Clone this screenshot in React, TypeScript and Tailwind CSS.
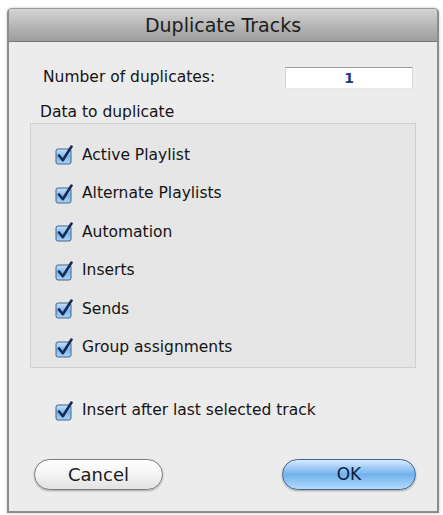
const font = { fontFamily: '"DejaVu Sans", "Liberation Sans", sans-serif' };

const Check = () => (
  <svg width="19" height="20" viewBox="0 0 19 20" className="shrink-0">
    <defs>
      <linearGradient id="cb" x1="0" y1="0" x2="0" y2="1">
        <stop offset="0" stopColor="#c9e3fb" />
        <stop offset="0.5" stopColor="#7fb6ea" />
        <stop offset="1" stopColor="#a9d2f6" />
      </linearGradient>
    </defs>
    <rect x="1" y="4" width="15" height="15" rx="2" fill="url(#cb)" stroke="#41658f" strokeWidth="1" />
    <path d="M4 10.5 L7.8 15.2 L16.5 1.5" fill="none" stroke="#142a57" strokeWidth="2.6" strokeLinecap="round" strokeLinejoin="round" />
  </svg>
);

const options = [
  "Active Playlist",
  "Alternate Playlists",
  "Automation",
  "Inserts",
  "Sends",
  "Group assignments",
];

export default function App() {
  return (
    <div className="w-[443px] h-[515px] bg-white pt-[8px] pl-[7px]" style={font}>
      <div className="w-[432px] h-[505px] flex flex-col border-x-2 border-b-2 border-[#8c8c8c] rounded-t-[5px] overflow-hidden bg-[#ececec] shadow-[0_0_3px_rgba(0,0,0,0.25)]">
        <div className="h-[34px] shrink-0 flex items-center justify-center bg-gradient-to-b from-[#d4d4d4] to-[#9c9c9c] border-b border-[#777777] border-t border-t-[#9a9a9a] text-[19px] text-[#1c1c1c]">
          Duplicate Tracks
        </div>

        <div className="mt-[24px] h-[24px] flex items-center pl-[34px] pr-[24px]">
          <span className="text-[15.5px] text-[#141414]">Number of duplicates:</span>
          <div className="ml-auto w-[128px] h-[22px] bg-white border-t border-t-[#9c9c9c] border-x border-x-[#d6d6d6] border-b border-b-[#e8e8e8] flex items-center justify-center text-[14px] font-bold text-[#1b3a78]">
            1
          </div>
        </div>

        <div className="mt-[13px] pl-[31px] h-[20px] flex items-center text-[15.5px] text-[#141414]">
          Data to duplicate
        </div>

        <div className="mx-[21px] border border-[#cfcfcf] bg-[#e6e6e6] pt-[12px] pl-[24px]">
          {options.map((o) => (
            <div key={o} className="h-[38.5px] flex items-center gap-[8px] text-[15.5px] text-[#141414]">
              <Check />
              <span>{o}</span>
            </div>
          ))}
        </div>

        <div className="mt-[33px] h-[20px] flex items-center gap-[8px] pl-[46px] text-[15.5px] text-[#141414]">
          <Check />
          <span>Insert after last selected track</span>
        </div>

        <div className="mt-[38px] flex items-center justify-between pl-[25px] pr-[21px]">
          <button className="w-[129px] h-[31px] rounded-full border border-[#7b7b7b] bg-gradient-to-b from-[#ffffff] via-[#f4f4f4] to-[#e2e2e2] text-[18px] text-[#1a1a1a] shadow-[0_1px_2px_rgba(0,0,0,0.3)]">
            Cancel
          </button>
          <button className="w-[134px] h-[31px] rounded-full border border-[#3f6790] bg-gradient-to-b from-[#d7ebfd] via-[#72b2ec] to-[#b2dafb] text-[17px] text-[#10203f] shadow-[0_1px_2px_rgba(0,0,0,0.3)]">
            OK
          </button>
        </div>
      </div>
    </div>
  );
}
